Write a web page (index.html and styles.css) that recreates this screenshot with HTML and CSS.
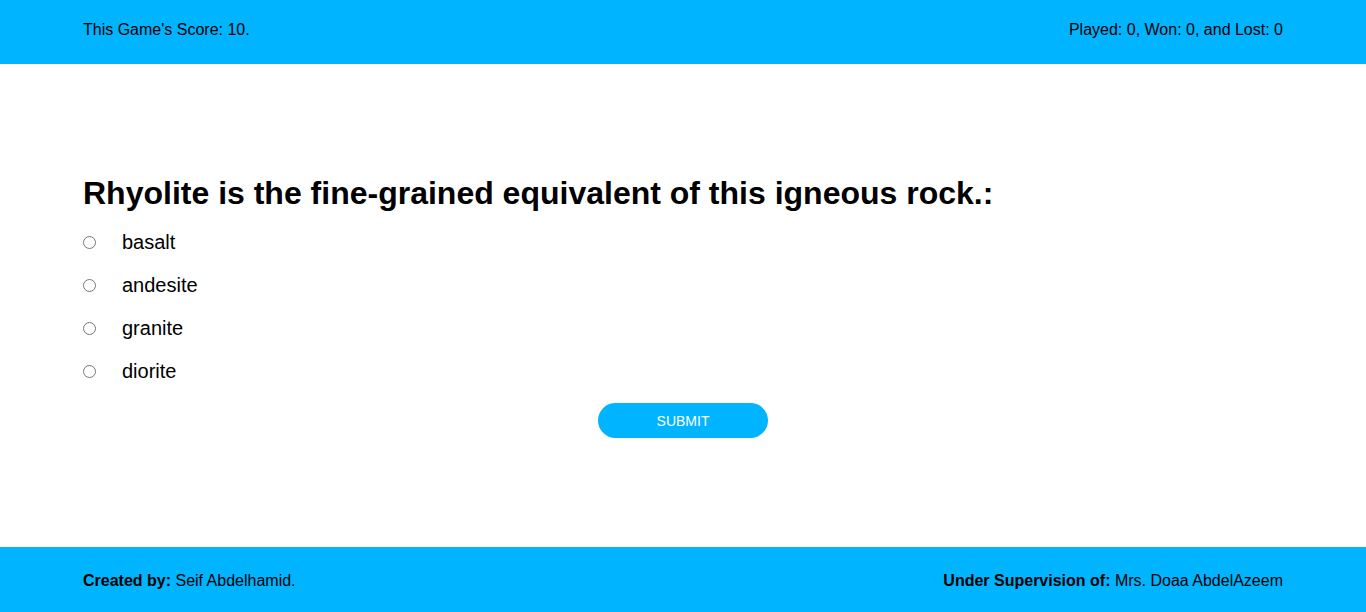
FILE: index.html
```html
<!DOCTYPE html>
<html>
<head>
<meta charset="utf-8">
<link rel="stylesheet" href="styles.css">
</head>
<body>
<div class="page">
  <header class="bar top">
    <div class="wrap row">
      <span>This Game's Score: 10.</span>
      <span>Played: 0, Won: 0, and Lost: 0</span>
    </div>
  </header>
  <main class="main">
    <div class="wrap">
      <h1 class="question">Rhyolite is the fine-grained equivalent of this igneous rock.:</h1>
      <form class="options">
        <label class="option"><input type="radio" name="a"><span>basalt</span></label>
        <label class="option"><input type="radio" name="a"><span>andesite</span></label>
        <label class="option"><input type="radio" name="a"><span>granite</span></label>
        <label class="option"><input type="radio" name="a"><span>diorite</span></label>
        <div class="actions"><button type="button" class="submit">SUBMIT</button></div>
      </form>
    </div>
  </main>
  <footer class="bar bottom">
    <div class="wrap row">
      <span><b>Created by:</b> Seif Abdelhamid.</span>
      <span><b>Under Supervision of:</b> Mrs. Doaa AbdelAzeem</span>
    </div>
  </footer>
</div>
</body>
</html>
```
FILE: styles.css
```css
* { box-sizing: border-box; }
html, body { margin: 0; padding: 0; }
body {
  font-family: "Liberation Sans", Arial, sans-serif;
  color: #000;
  background: #fff;
}
.page {
  min-height: 100vh;
  display: flex;
  flex-direction: column;
}
.wrap {
  width: 1200px;
  margin: 0 auto;
}
.row {
  display: flex;
  justify-content: space-between;
}
.bar {
  background: #00b4ff;
  font-size: 16px;
  line-height: 18px;
}
.top {
  height: 64px;
  padding-top: 21px;
}
.bottom {
  height: 65px;
  padding-top: 25px;
}
.main {
  flex: 1;
  display: flex;
  flex-direction: column;
  justify-content: center;
}
.question {
  margin: 2px 0 19px;
  font-size: 32px;
  line-height: 37px;
  font-weight: bold;
}
.options {
  display: flex;
  flex-direction: column;
  gap: 20px;
}
.option {
  display: flex;
  align-items: center;
  gap: 26px;
  font-size: 20px;
  line-height: 23px;
}
.option input {
  margin: 0;
  width: 13px;
  height: 13px;
}
.actions {
  display: flex;
  justify-content: center;
}
.submit {
  width: 170px;
  height: 35px;
  border: none;
  border-radius: 18px;
  background: #00b4ff;
  color: #fff;
  font-family: "Liberation Sans", Arial, sans-serif;
  font-size: 14px;
  cursor: pointer;
}
```
